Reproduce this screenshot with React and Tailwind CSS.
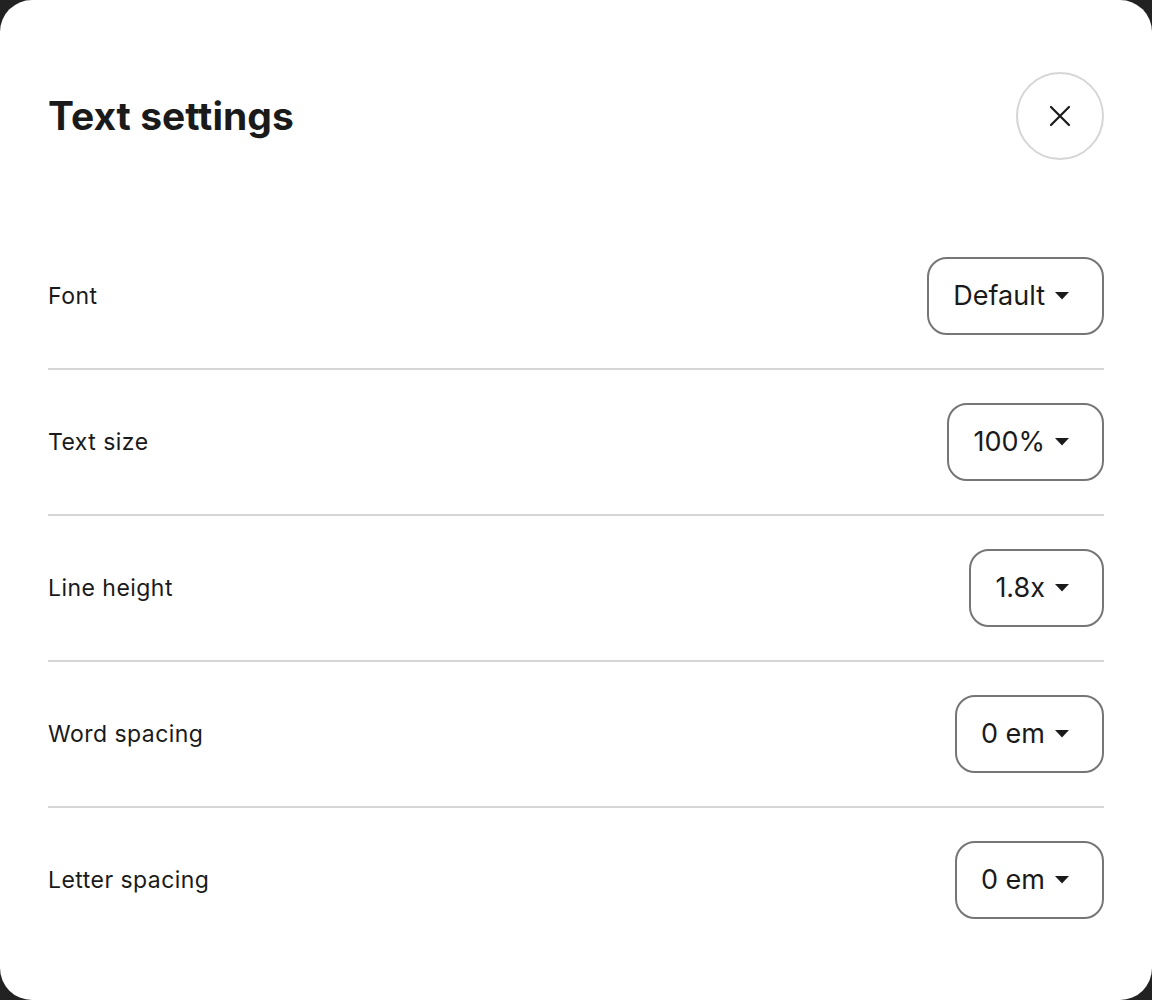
import React from 'react';

const rows = [
  { label: 'Font', value: 'Default' },
  { label: 'Text size', value: '100%' },
  { label: 'Line height', value: '1.8x' },
  { label: 'Word spacing', value: '0 em' },
  { label: 'Letter spacing', value: '0 em' },
];

const Caret = () => (
  <svg width="14" height="8" viewBox="0 0 14 8" className="ml-2.5 shrink-0">
    <path d="M0 0h14L7 7.5z" fill="#1a1a1a" />
  </svg>
);

const SettingRow = ({ label, value, last }) => (
  <div
    className={`flex items-center justify-between py-[33px] ${
      last ? '' : 'border-b-2 border-[#d6d6d6]'
    }`}
  >
    <span className="text-[23px] tracking-[0.02em] text-[#1a1a1a]">{label}</span>
    <button className="flex items-center h-[78px] pl-[24px] pr-[33px] rounded-[20px] border-2 border-[#767676] bg-white text-[27px] text-[#1a1a1a]">
      {value}
      <Caret />
    </button>
  </div>
);

export default function App() {
  return (
    <div className="w-[1152px] h-[1000px] bg-[#222222] font-['Inter',sans-serif]">
      <div className="w-full h-full bg-white rounded-[32px] px-12 pt-[72px]">
        {/* Header */}
        <div className="flex items-center justify-between">
          <h1 className="text-[39px] font-bold text-[#1a1a1a]">
            Text settings
          </h1>
          <button className="w-[88px] h-[88px] rounded-full border-2 border-[#d6d6d6] flex items-center justify-center">
            <svg width="22" height="22" viewBox="0 0 22 22" fill="none">
              <path d="M2 2l18 18M20 2L2 20" stroke="#1a1a1a" strokeWidth="2.2" strokeLinecap="round" />
            </svg>
          </button>
        </div>

        {/* Settings */}
        <div className="mt-16">
          {rows.map((row, i) => (
            <SettingRow key={row.label} {...row} last={i === rows.length - 1} />
          ))}
        </div>
      </div>
    </div>
  );
}
